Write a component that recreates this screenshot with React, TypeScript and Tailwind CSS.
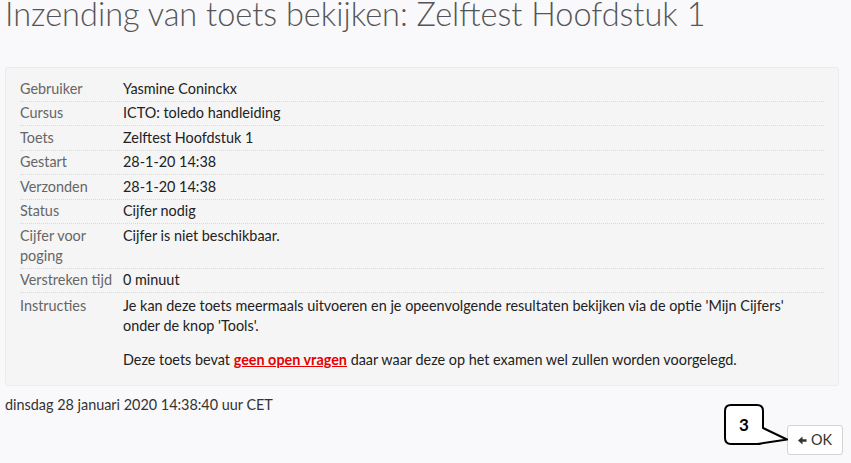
import React from 'react';

const rows: { label: React.ReactNode; value: React.ReactNode }[] = [
  { label: 'Gebruiker', value: 'Yasmine Coninckx' },
  { label: 'Cursus', value: 'ICTO: toledo handleiding' },
  { label: 'Toets', value: 'Zelftest Hoofdstuk 1' },
  { label: 'Gestart', value: '28-1-20 14:38' },
  { label: 'Verzonden', value: '28-1-20 14:38' },
  { label: 'Status', value: 'Cijfer nodig' },
  { label: <>Cijfer voor<br />poging</>, value: 'Cijfer is niet beschikbaar.' },
  { label: 'Verstreken tijd', value: '0 minuut' },
];

const Callout = () => (
  // annotation bubble pointing at the OK button
  <svg className="absolute left-[720px] top-[400px]" width="72" height="50" viewBox="0 0 72 50">
    <path
      d="M11,5 H37 Q43,5 43,11 V28 L67,39.5 L41,43.5 Q40,44 37,44 H11 Q5,44 5,38 V11 Q5,5 11,5 Z"
      fill="white"
      stroke="black"
      strokeWidth="2"
      strokeLinejoin="round"
    />
    <text x="24" y="31" textAnchor="middle" fontFamily="Lato, sans-serif" fontWeight="700" fontSize="17" fill="#000">
      3
    </text>
  </svg>
);

export default function App() {
  return (
    <div className="relative w-[851px] h-[463px] overflow-hidden bg-[#f9f9fb] text-[14.4px] text-[#333] font-['Lato',sans-serif]">
      <h1 className="ml-[5px] mt-[-3px] text-[32.5px] font-light leading-[33px] text-[#555] whitespace-nowrap">
        Inzending van toets bekijken: Zelftest Hoofdstuk 1
      </h1>

      <div className="ml-[5px] mt-[37px] w-[834px] rounded-[3px] border border-[#ececec] bg-[#f5f5f5] px-[14px] pt-[9px] pb-[3px]">
        {rows.map((r, i) => (
          <div
            key={i}
            className={`flex py-[1.75px] leading-[20px] ${i > 0 ? 'border-t border-dotted border-[#d9d9d9]' : ''}`}
          >
            <div className="w-[103px] shrink-0 text-[#666]">{r.label}</div>
            <div className="flex-1 text-[#222]">{r.value}</div>
          </div>
        ))}
        <div className="flex pt-[3px] pb-[2px] leading-[20px] border-t border-dotted border-[#d9d9d9]">
          <div className="w-[103px] shrink-0 text-[#666]">Instructies</div>
          <div className="flex-1 text-[#222]">
            <p className="mb-[14px]">
              Je kan deze toets meermaals uitvoeren en je opeenvolgende resultaten bekijken via de optie 'Mijn Cijfers'
              <br />
              onder de knop 'Tools'.
            </p>
            <p className="mb-[10px]">
              Deze toets bevat{' '}
              <span className="font-bold text-[#e60000] underline">geen open vragen</span> daar waar deze op het
              examen wel zullen worden voorgelegd.
            </p>
          </div>
        </div>
      </div>

      <div className="ml-[5px] mt-[9px] leading-[20px]">dinsdag 28 januari 2020 14:38:40 uur CET</div>

      <div className="flex justify-end pr-[8px] mt-[10px]">
        <button className="flex h-[30px] items-center gap-[4px] rounded-[3px] border border-[#d4d4d4] bg-white px-[10px] text-[14.4px] text-[#333]">
          <svg width="9" height="9" viewBox="0 0 10 10">
            <path d="M0,5 L5,0.5 L5,3.5 L9.5,3.5 L9.5,6.5 L5,6.5 L5,9.5 Z" fill="#333" />
          </svg>
          OK
        </button>
      </div>

      <Callout />
    </div>
  );
}
